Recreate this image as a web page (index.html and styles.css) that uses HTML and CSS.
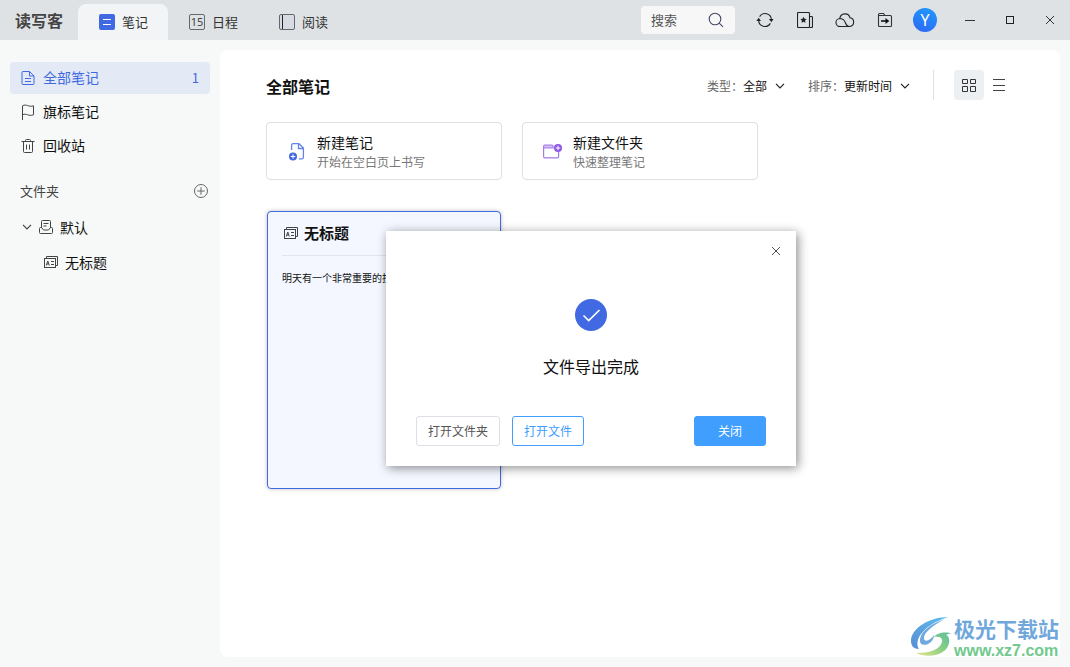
FILE: index.html
```html
<!DOCTYPE html>
<html lang="zh-CN">
<head>
<meta charset="utf-8">
<title>读写客</title>
<link rel="stylesheet" href="styles.css">
</head>
<body>
<header class="topbar">
  <div class="brand">读写客</div>
  <nav class="tabs">
    <button class="tab tab-active" type="button">
      <svg width="16" height="16" viewBox="0 0 16 16"><rect width="16" height="16" rx="2" fill="#4169e1"/><path d="M4 5.5h8M4 10.5h8" stroke="#fff"/></svg>
      笔记
    </button>
    <button class="tab" type="button">
      <span class="calendar-icon">15</span>
      日程
    </button>
    <button class="tab" type="button">
      <svg width="16" height="16" viewBox="0 0 16 16" fill="none" stroke="#65686d"><rect x=".5" y=".5" width="15" height="15" rx="1.5" fill="#d7dae3"/><path d="M3.5 1v14" stroke="#222"/></svg>
      阅读
    </button>
  </nav>
  <div class="search">
    <input class="search-input" type="text" placeholder="搜索" aria-label="搜索">
    <svg width="16" height="16" viewBox="0 0 16 16" fill="none" stroke="#454a66" stroke-width="1.1"><circle cx="7" cy="7" r="5.8"/><path d="M11.2 11.2l3.8 3.6"/></svg>
  </div>
  <div class="actions">
    <button class="icon-button" type="button" aria-label="同步">
      <svg width="18" height="16" viewBox="0 0 18 16" fill="none" stroke="#222" stroke-width="1.1"><path d="M3.6 4.6A6.3 6.3 0 0 1 15.3 8M14.4 11.4A6.3 6.3 0 0 1 2.7 8"/><path d="M13 7h4.6l-2.3 3.2zM.4 9H5L2.7 5.8z" fill="#222" stroke="none"/></svg>
    </button>
    <button class="icon-button" type="button" aria-label="收藏">
      <svg width="16" height="16" viewBox="0 0 16 16" fill="none" stroke="#222" stroke-width="1.1"><rect x=".5" y=".5" width="12" height="15" rx="1"/><path d="M12.5 4.5h2a1 1 0 0 1 1 1v9a1 1 0 0 1-1 1h-2"/><path d="M6.5 4.8l1 2 2.2.3-1.6 1.5.4 2.2-2-1-2 1 .4-2.2-1.6-1.5 2.2-.3z" fill="#222" stroke="none"/></svg>
    </button>
    <button class="icon-button" type="button" aria-label="云端">
      <svg width="20" height="16" viewBox="0 0 20 16" fill="none" stroke="#222" stroke-width="1.1"><path d="M14.8 14.500H5.200a4 4 0 0 1-.4-8A5.200 5.200 0 0 1 15 5.800a4.400 4.400 0 0 1-.2 8.700c-2.500 0-3.600-1.500-4.300-3.500S8.500 6.500 4.800 6.500"/></svg>
    </button>
    <button class="icon-button" type="button" aria-label="导出">
      <svg width="16" height="16" viewBox="0 0 16 16" fill="none" stroke="#333" stroke-width="1.1"><path d="M1.500 4V2.500a1 1 0 0 1 1-1h4l1.500 2h5.500a1 1 0 0 1 1 1v9a1 1 0 0 1-1 1h-11a1 1 0 0 1-1-1zM1.500 3.500H8"/><path d="M4 9h6.500" stroke="#111" stroke-width="1.600"/><path d="M8.500 6l3.800 3-3.800 3z" fill="#111" stroke="none"/></svg>
    </button>
    <button class="icon-button" type="button" aria-label="账户"><span class="avatar">Y</span></button>
  </div>
  <div class="window-controls">
    <button class="icon-button" type="button" aria-label="最小化"><svg width="10" height="10" viewBox="0 0 10 10"><path d="M0 5.500h10" stroke="#333"/></svg></button>
    <button class="icon-button" type="button" aria-label="最大化"><svg width="8" height="8" viewBox="0 0 8 8"><rect x=".5" y=".5" width="7" height="7" fill="none" stroke="#222"/></svg></button>
    <button class="icon-button" type="button" aria-label="关闭窗口"><svg width="10" height="10" viewBox="0 0 10 10"><path d="M1 1l8 8M9 1l-8 8" stroke="#333"/></svg></button>
  </div>
</header>

<div class="workspace">
  <aside class="sidebar">
    <nav class="nav">
      <button class="nav-item nav-item-active" type="button">
        <svg width="14" height="16" viewBox="0 0 14 16" fill="none" stroke="#4169e1"><path d="M8.500 1.500H2a1 1 0 0 0-1 1v11a1 1 0 0 0 1 1h10a1 1 0 0 0 1-1V6zV6H13M4 8.500h6M4 11.500h6"/></svg>
        <span class="nav-label">全部笔记</span><span class="nav-count">1</span>
      </button>
      <button class="nav-item" type="button">
        <svg width="14" height="16" viewBox="0 0 14 16" fill="none" stroke="#444"><path d="M1.500 16V1.800C5.500-.5 7.500 3.500 12.500 1.800v9C7.500 12.800 5.500 8.800 1.500 10.800"/></svg>
        <span class="nav-label">旗标笔记</span>
      </button>
      <button class="nav-item" type="button">
        <svg width="14" height="16" viewBox="0 0 14 16" fill="none" stroke="#444"><path d="M.5 3.500h13M4.500 3.500v-1a1 1 0 0 1 1-1h3a1 1 0 0 1 1 1v1M2.500 3.500v10a1 1 0 0 0 1 1h7a1 1 0 0 0 1-1v-10M5.500 6.500v5M8.500 6.500v5"/></svg>
        <span class="nav-label">回收站</span>
      </button>
    </nav>
    <div class="folders-head">
      <h2 class="folders-title">文件夹</h2>
      <button class="add-folder" type="button" aria-label="添加文件夹">
        <svg width="14" height="14" viewBox="0 0 14 14" fill="none" stroke="#666"><circle cx="7" cy="7" r="6.500"/><path d="M7 3.200v7.600M3.200 7h7.600"/></svg>
      </button>
    </div>
    <div class="tree">
      <button class="tree-item" type="button">
        <svg width="10" height="6" viewBox="0 0 10 6" fill="none" stroke="#444" stroke-width="1.200"><path d="M1 .8l4 4 4-4"/></svg>
        <svg width="14" height="14" viewBox="0 0 14 14" fill="none" stroke="#444"><path d="M2.500 8V1.500a1 1 0 0 1 1-1h7a1 1 0 0 1 1 1V8M4.500 3.500h5M4.500 6h3M2.500 7.500h-1a1 1 0 0 0-1 1v4a1 1 0 0 0 1 1h11a1 1 0 0 0 1-1v-4a1 1 0 0 0-1-1h-1L9.500 10h-5z"/></svg>
        默认
      </button>
      <button class="tree-item tree-child" type="button">
        <svg width="14" height="12" viewBox="0 0 14 12" fill="none" stroke="#444"><path d="M2.500 2.500v-2h11v9h-2"/><rect x=".5" y="2.500" width="11" height="9"/><path d="M2.300 9.500l1.500-4.500 1.500 4.500M2.800 8h2M7 5.500h3M7 8.500h3"/></svg>
        无标题
      </button>
    </div>
  </aside>

  <main class="panel">
    <div class="toolbar">
      <h1 class="page-title">全部笔记</h1>
      <div class="filter">
        <label class="filter-label" for="type">类型：</label>
        <select class="filter-select" id="type"><option>全部</option></select>
        <svg width="10" height="6" viewBox="0 0 10 6" fill="none" stroke="#222" stroke-width="1.200"><path d="M1 .8l4 4 4-4"/></svg>
      </div>
      <div class="filter">
        <label class="filter-label" for="sort">排序：</label>
        <select class="filter-select" id="sort"><option>更新时间</option></select>
        <svg width="10" height="6" viewBox="0 0 10 6" fill="none" stroke="#222" stroke-width="1.200"><path d="M1 .8l4 4 4-4"/></svg>
      </div>
      <div class="view-switch">
        <button class="view-button view-active" type="button" aria-label="网格视图"><svg width="14" height="14" viewBox="0 0 14 14" fill="none" stroke="#333"><path d="M1.500 1.500h4v4h-4zM8.500 1.500h5v4h-5zM1.500 8.500h4v5h-4zM8.500 8.500h5v5h-5zM.5 1.500h5v4h-5zM.5 8.500h5v5h-5z" stroke="none"/><path d="M.5 1.500h5v4h-5zM8.500 1.500h5v4h-5zM.5 8.500h5v5h-5zM8.500 8.500h5v5h-5z"/></svg></button>
        <button class="view-button" type="button" aria-label="列表视图"><svg width="12" height="12" viewBox="0 0 12 12" stroke="#444"><path d="M0 .5h12M0 6.500h12M0 11.500h12"/></svg></button>
      </div>
    </div>

    <div class="create-row">
      <button class="create-card" type="button">
        <svg width="20" height="20" viewBox="0 0 20 20" fill="none" stroke="#6384ea" stroke-width="1.300"><path d="M5.600 8V3.200a1.500 1.500 0 0 1 1.500-1.500H13l4.400 4.400v9.200a1.500 1.500 0 0 1-1.500 1.500h-3M12.500 2v4.500h4.600"/><circle cx="7" cy="14.500" r="4" fill="#4169e1" stroke="none"/><path d="M7 12.200v4.600M4.700 14.500h4.600" stroke="#fff" stroke-width="1"/></svg>
        <span class="create-text"><span class="create-name">新建笔记</span><span class="create-hint">开始在空白页上书写</span></span>
      </button>
      <button class="create-card" type="button">
        <svg width="20" height="20" viewBox="0 0 20 20" fill="none" stroke="#a37aea" stroke-width="1.200"><path d="M1.600 6h9.500V4.300a1.300 1.300 0 0 0-1.300-1.300H2.900a1.300 1.300 0 0 0-1.300 1.300z" fill="#d3bdf6"/><path d="M1.600 6v8.500a1.300 1.300 0 0 0 1.300 1.300h12.400a1.300 1.300 0 0 0 1.300-1.300V10"/><circle cx="16" cy="6" r="4" fill="#8b55e2" stroke="none"/><path d="M16 3.700v4.600M13.700 6h4.600" stroke="#fff" stroke-width="1"/></svg>
        <span class="create-text"><span class="create-name">新建文件夹</span><span class="create-hint">快速整理笔记</span></span>
      </button>
    </div>

    <div class="notes">
      <article class="note">
        <div class="note-head">
          <svg width="14" height="12" viewBox="0 0 14 12" fill="none" stroke="#444"><path d="M2.500 2.500v-2h11v9h-2"/><rect x=".5" y="2.500" width="11" height="9"/><path d="M2.300 9.500l1.500-4.500 1.500 4.500M2.800 8h2M7 5.500h3M7 8.500h3"/></svg>
          <h2 class="note-title">无标题</h2>
        </div>
        <p class="note-body">明天有一个非常重要的技</p>
      </article>
    </div>
  </main>
</div>

<div class="dialog" role="dialog" aria-labelledby="dialog-title">
  <button class="dialog-close" type="button" aria-label="关闭提示"><svg width="10" height="10" viewBox="0 0 10 10"><path d="M1 1l8 8M9 1l-8 8" stroke="#555"/></svg></button>
  <svg width="32" height="32" viewBox="0 0 32 32" fill="none"><circle cx="16" cy="16" r="16" fill="#4169e1"/><path d="M8.500 16.500l5.200 5L24.500 11" stroke="#fff" stroke-width="1.700"/></svg>
  <h2 class="dialog-title" id="dialog-title">文件导出完成</h2>
  <div class="dialog-buttons">
    <button class="button" type="button">打开文件夹</button>
    <button class="button button-outline" type="button">打开文件</button>
    <button class="button button-primary" type="button">关闭</button>
  </div>
</div>

<div class="watermark">
  <svg width="44" height="42" viewBox="0 0 44 42">
    <defs>
      <linearGradient id="blue" x1="0" y1="1" x2="1" y2="0"><stop offset="0" stop-color="#5b8bd4"/><stop offset="1" stop-color="#5cc0ee"/></linearGradient>
      <linearGradient id="green" x1="0" y1="1" x2="1" y2="0"><stop offset="0" stop-color="#e3e58a"/><stop offset=".5" stop-color="#8bcf85"/><stop offset="1" stop-color="#58bd9b"/></linearGradient>
    </defs>
    <path d="M38 1C20 1 1 12 1 25c0 5 3 8 8 8C4 25 11 10 38 1z" fill="url(#blue)"/>
    <path d="M35 3C18 9 9 17 10 26c2 6 14 2 14-7-4 6-9 7-10 4-1-6 8-13 21-20z" fill="#70aadd"/>
    <path d="M43 18c-8-3-16-1-19 3 6-1 9 1 8 5-2 8-13 11-26 11 12 6 31 2 33-10 1-5-1-7-3-8 2-1 4-2 7-1z" fill="url(#green)"/>
  </svg>
  <div class="watermark-text"><span class="watermark-name">极光下载站</span><span class="watermark-url">www.xz7.com</span></div>
</div>
</body>
</html>
```

FILE: styles.css
```css
* {
  box-sizing: border-box;
}

body {
  margin: 0;
  min-height: 100vh;
  display: flex;
  flex-direction: column;
  background: #f7f9f8;
  color: #111;
  font: 14px/20px "Noto Sans CJK SC", sans-serif;
}

h1,
h2,
p {
  margin: 0;
}

button,
input,
select {
  margin: 0;
  padding: 0;
  border: 0;
  background: none;
  color: inherit;
  font: inherit;
}

svg {
  flex: none;
  display: block;
}

.topbar {
  display: flex;
  align-items: center;
  height: 40px;
  background: #dee2e5;
}

.brand {
  width: 78px;
  padding-left: 15px;
  color: #444;
  font-size: 16px;
  font-weight: 700;
}

.tabs {
  display: flex;
  align-self: flex-end;
  flex: 1;
}

.tab {
  display: flex;
  align-items: center;
  gap: 7px;
  width: 90px;
  height: 36px;
  padding-left: 21px;
  border-radius: 8px 8px 0 0;
  color: #333;
  font-size: 13px;
}

.tab-active {
  background: #f2f4f5;
}

.calendar-icon {
  width: 16px;
  height: 16px;
  border: 1px solid #65686d;
  border-radius: 2px;
  color: #444;
  font: 11px/14px "Noto Sans", sans-serif;
  text-align: center;
}

.search {
  display: flex;
  align-items: center;
  width: 94px;
  height: 28px;
  margin-right: 10px;
  padding: 0 11px 0 10px;
  border-radius: 4px;
  background: #f7f7f7;
}

.search-input {
  flex: 1;
  min-width: 0;
  font-size: 13px;
}

.search-input::placeholder {
  color: #555;
}

.actions,
.window-controls {
  display: flex;
}

.window-controls {
  margin-left: 5px;
}

.icon-button {
  display: flex;
  align-items: center;
  justify-content: center;
  width: 40px;
  height: 40px;
}

.avatar {
  width: 24px;
  height: 24px;
  border-radius: 50%;
  background: linear-gradient(200deg, #1e9bff, #2f66f2);
  color: #fff;
  font: 16px/24px "Noto Sans", sans-serif;
}

.workspace {
  display: flex;
  flex: 1;
  padding: 10px 10px 10px 0;
}

.sidebar {
  width: 220px;
  padding: 12px 10px;
}

.nav {
  display: flex;
  flex-direction: column;
  gap: 2px;
}

.nav-item {
  display: flex;
  align-items: center;
  gap: 8px;
  height: 32px;
  padding: 0 11px;
  border-radius: 4px;
  text-align: left;
}

.nav-item-active {
  background: #e4e9f6;
  color: #4169e1;
}

.nav-label {
  flex: 1;
  padding-bottom: 2px;
}

.nav-count {
  font-size: 13px;
}

.folders-head {
  display: flex;
  align-items: center;
  justify-content: space-between;
  height: 24px;
  margin: 17px 2px 6px 10px;
}

.folders-title {
  color: #444;
  font-size: 13px;
  font-weight: 400;
}

.tree {
  display: flex;
  flex-direction: column;
}

.tree-item {
  display: flex;
  align-items: center;
  gap: 7px;
  height: 35px;
  padding-left: 12px;
}

.tree-child {
  padding-left: 34px;
}

.panel {
  flex: 1;
  padding: 20px 46px;
  border-radius: 8px;
  background: #fff;
}

.toolbar {
  display: flex;
  align-items: center;
  height: 30px;
}

.page-title {
  flex: 1;
  padding-top: 2px;
  font-size: 16px;
  font-weight: 700;
}

.filter {
  display: flex;
  align-items: center;
  margin-right: 23px;
  padding-top: 2px;
  font-size: 12px;
}

.filter-label {
  color: #666;
}

.filter-select {
  margin-right: 7px;
  appearance: none;
}

.view-switch {
  display: flex;
  padding-left: 20px;
  border-left: 1px solid #dcdfe6;
}

.view-button {
  display: flex;
  align-items: center;
  justify-content: center;
  width: 30px;
  height: 30px;
  border-radius: 4px;
}

.view-active {
  background: #edf0f3;
}

.create-row {
  display: flex;
  gap: 20px;
  margin-top: 22px;
}

.create-card {
  display: flex;
  align-items: center;
  gap: 11px;
  width: 236px;
  height: 58px;
  padding: 1px 0 0 19px;
  border: 1px solid #dfdfdf;
  border-radius: 4px;
  text-align: left;
}

.create-text {
  display: flex;
  flex-direction: column;
}

.create-hint {
  color: #777;
  font-size: 12px;
}

.notes {
  display: flex;
  margin-top: 30px;
  padding: 1px;
}

.note {
  width: 234px;
  height: 278px;
  padding: 0 14px;
  border: 1px solid #4169e1;
  border-radius: 4px;
  background: #f4f7ff;
  box-shadow: 0 0 4px rgba(0, 0, 0, 0.25);
}

.note-head {
  display: flex;
  align-items: center;
  gap: 6px;
  height: 44px;
  padding: 0 0 2px 2px;
  border-bottom: 1px solid #e1e4ec;
}

.note-title {
  font-size: 15px;
  font-weight: 700;
}

.note-body {
  overflow: hidden;
  margin-top: 14px;
  font-size: 10px;
  line-height: 16px;
  white-space: nowrap;
}

.dialog {
  position: absolute;
  top: 231px;
  left: 386px;
  display: flex;
  flex-direction: column;
  align-items: center;
  width: 410px;
  padding: 68px 30px 20px;
  background: #fff;
  box-shadow: 2px 2px 10px rgba(0, 0, 0, 0.45);
}

.dialog-close {
  position: absolute;
  top: 10px;
  right: 10px;
  display: flex;
  align-items: center;
  justify-content: center;
  width: 20px;
  height: 20px;
}

.dialog-title {
  margin: 23px 0 38px;
  font-size: 16px;
  font-weight: 400;
  line-height: 24px;
}

.dialog-buttons {
  display: flex;
  align-self: stretch;
  gap: 12px;
}

.button {
  height: 30px;
  padding: 0 11px;
  border: 1px solid #dcdfe6;
  border-radius: 3px;
  background: #fff;
  color: #555;
  font-size: 12px;
}

.button-outline {
  border-color: #409eff;
  color: #409eff;
}

.button-primary {
  margin-left: auto;
  padding: 0 23px;
  border-color: #409eff;
  background: #409eff;
  color: #fff;
}

.watermark {
  position: absolute;
  right: 11px;
  bottom: 7px;
  display: flex;
  align-items: center;
}

.watermark-text {
  display: flex;
  flex-direction: column;
}

.watermark-name {
  color: #70a8dc;
  font-size: 21px;
  font-weight: 700;
  line-height: 28px;
}

.watermark-url {
  color: #71c98d;
  font: 700 16px/18px "Liberation Sans", sans-serif;
}
```
